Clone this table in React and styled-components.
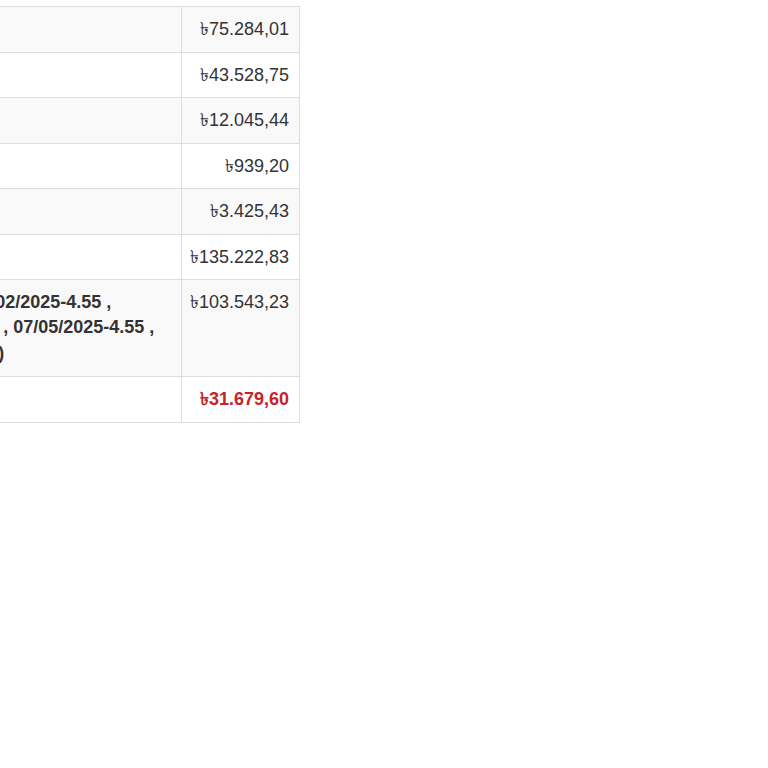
import React from 'react'
import styled, { createGlobalStyle } from 'styled-components'

const GlobalStyle = createGlobalStyle`
  html, body {
    margin: 0;
    padding: 0;
    background: #fff;
  }
  body {
    font-family: "Liberation Sans", Arial, "Noto Sans", sans-serif;
    font-size: 18px;
    line-height: 24.5px;
    color: #333;
    overflow: hidden;
  }
`

const Wrapper = styled.div`
  padding-top: 6px;
  margin-left: -290px;
`

const Table = styled.table`
  width: 590px;
  border-collapse: collapse;
  border-spacing: 0;
  border: 1px solid #ddd;
  table-layout: fixed;
`

const Row = styled.tr`
  background: ${props => props.striped ? '#f9f9f9' : '#fff'};
`

const Label = styled.td`
  width: 450px;
  padding: 10px;
  border: 1px solid #ddd;
  vertical-align: top;
  font-weight: bold;
  white-space: nowrap;
  overflow: hidden;
  line-height: ${props => props.multi ? '25.4px' : '24.5px'};
`

const Amount = styled.td`
  padding: 10px 10px 10px 2px;
  border: 1px solid #ddd;
  vertical-align: top;
  text-align: right;
  white-space: nowrap;
  font-weight: ${props => props.total ? 'bold' : 'normal'};
  color: ${props => props.total ? '#c9222b' : '#333'};
`

const Currency = styled.span`
  line-height: 0;
`

const rows = [
  { label: 'Kredi Tutarı', amount: '75.284,01' },
  { label: 'Ödenen Anapara', amount: '43.528,75' },
  { label: 'Ödenen Faiz', amount: '12.045,44' },
  { label: 'Gecikme Faizi', amount: '939,20' },
  { label: 'Masraflar', amount: '3.425,43' },
  { label: 'Toplam Ödeme', amount: '135.222,83' },
  {
    label: [
      'Faizi Oranı (06/01/2025-4.55 , 05/02/2025-4.55 ,',
      '06/03/2025-4.55 , 06/04/2025-4.55 , 07/05/2025-4.55 ,',
      '06/06/2025-4.55, 07/07/2025-4.55 )',
    ],
    amount: '103.543,23',
  },
  { label: 'Kalan Bakiye', amount: '31.679,60', total: true },
]

export default function App() {
  return (
    <>
      <GlobalStyle />
      <Wrapper>
        <Table>
          <tbody>
            {rows.map((r, i) => (
              <Row key={i} striped={i % 2 === 0}>
                <Label multi={Array.isArray(r.label)}>
                  {Array.isArray(r.label)
                    ? r.label.map((line, j) => (
                        <React.Fragment key={j}>
                          {j > 0 && <br />}
                          {line}
                        </React.Fragment>
                      ))
                    : r.label}
                </Label>
                <Amount total={r.total}>
                  <Currency>৳</Currency>
                  {r.amount}
                </Amount>
              </Row>
            ))}
          </tbody>
        </Table>
      </Wrapper>
    </>
  )
}
